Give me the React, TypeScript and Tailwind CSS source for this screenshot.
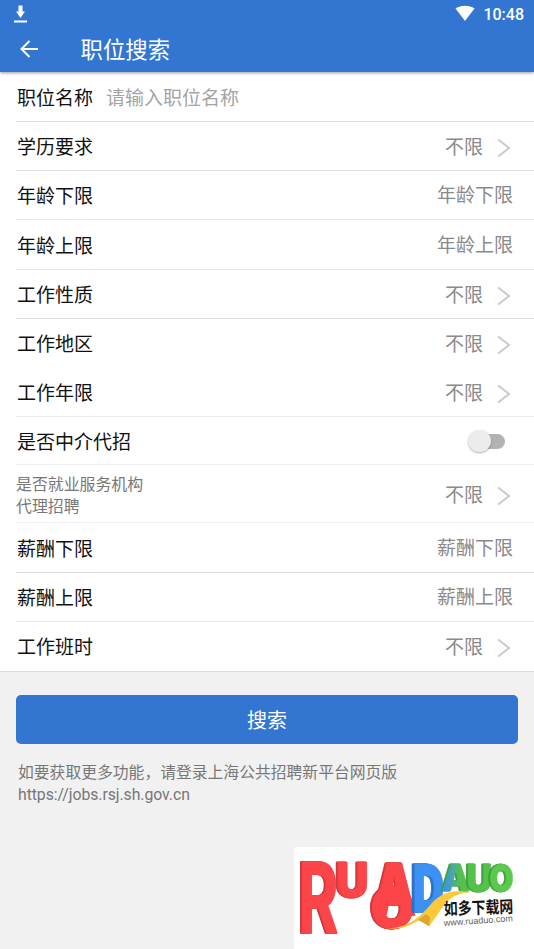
interface FormRow {
  label: string;
  value?: string;
  kind: "input" | "select" | "number" | "switch";
  height: string;
  border: string;
  small?: boolean;
}

const rows: FormRow[] = [
  { label: "职位名称", value: "请输入职位名称", kind: "input", height: "h-[50px]", border: "border-[#dedede]" },
  { label: "学历要求", value: "不限", kind: "select", height: "h-[49px]", border: "border-[#dedede]" },
  { label: "年龄下限", value: "年龄下限", kind: "number", height: "h-[49px]", border: "border-[#ebebeb]" },
  { label: "年龄上限", value: "年龄上限", kind: "number", height: "h-[50px]", border: "border-[#e8e8e8]" },
  { label: "工作性质", value: "不限", kind: "select", height: "h-[49px]", border: "border-[#dedede]" },
  { label: "工作地区", value: "不限", kind: "select", height: "h-[49px]", border: "border-transparent" },
  { label: "工作年限", value: "不限", kind: "select", height: "h-[49px]", border: "border-[#ebebeb]" },
  { label: "是否中介代招", kind: "switch", height: "h-[48px]", border: "border-[#efefef]" },
  { label: "是否就业服务机构代理招聘", value: "不限", kind: "select", height: "h-[58px]", border: "border-[#efefef]", small: true },
  { label: "薪酬下限", value: "薪酬下限", kind: "number", height: "h-[50px]", border: "border-[#dedede]" },
  { label: "薪酬上限", value: "薪酬上限", kind: "number", height: "h-[49px]", border: "border-[#ebebeb]" },
  { label: "工作班时", value: "不限", kind: "select", height: "h-[49px]", border: "border-transparent" },
];

function Chevron() {
  return (
    <svg className="mr-[2px] ml-[14px] h-5 w-[14px]" viewBox="0 0 14 20" fill="none">
      <path d="M1.2 1.5 12 10 1.2 18.5" stroke="#cacaca" strokeWidth="2" />
    </svg>
  );
}

function Toggle() {
  return (
    <div className="relative -mt-[2px] mr-2 h-[15px] w-[36px]">
      <div className="ml-1 h-[15px] w-8 rounded-full bg-[#b2b2b2]" />
      <div className="absolute top-[-4px] left-[-1px] h-[22px] w-[23px] rounded-full bg-[#ececec] shadow-[0_1px_2px_rgba(0,0,0,0.3)]" />
    </div>
  );
}

function Row({ row }: { row: FormRow }) {
  return (
    <div className={`ml-4 flex items-center border-b pl-px ${row.height} ${row.border}`}>
      {row.small ? (
        <span className="-ml-px w-[130px] pt-[4px] text-[15.9px] leading-[22px] text-[#777]">{row.label}</span>
      ) : (
        <span className="pt-[4px] text-[19px] leading-7 text-[#111]">{row.label}</span>
      )}
      {row.kind === "input" ? (
        <span className="ml-[13px] pt-[4px] text-[19px] leading-7 text-[#a3a3a3]">{row.value}</span>
      ) : (
        <div className="ml-auto flex items-center pt-[4px] pr-[21px] text-[19px] leading-7 text-[#8a8a8a]">
          {row.kind === "switch" && <Toggle />}
          {row.kind === "number" && <span className="-mt-[2px]">{row.value}</span>}
          {row.kind === "select" && (
            <>
              <span>{row.value}</span>
              <Chevron />
            </>
          )}
        </div>
      )}
    </div>
  );
}

interface BlockLetterProps {
  char: string;
  transform: string;
  face: string;
}

const redDepth = "[filter:drop-shadow(-1px_0_0_#d8393e)_drop-shadow(-1px_0.5px_0_#c93238)]";
const blueDepth = "[filter:drop-shadow(-1px_0_0_#2f7bd6)_drop-shadow(-2px_0.5px_0_#286fc5)]";
const greenDepth = "[filter:drop-shadow(-1px_0_0_#3fa73c)_drop-shadow(-1px_0.5px_0_#389b38)]";

function BlockLetter({ char, transform, face }: BlockLetterProps) {
  return (
    <text transform={transform} fill={face} stroke={face} strokeWidth="0.6" strokeLinejoin="round">
      {char}
    </text>
  );
}

function SiteLogo() {
  return (
    <svg
      className="block h-[102px] w-[240px] overflow-visible font-[Inter,sans-serif] text-[40px] font-black"
      viewBox="294 847 240 102"
    >
      <defs>
        <linearGradient id="blueGreen" x1="0" x2="1" y1="0" y2="0">
          <stop offset="0.1" stopColor="#3d91f2" />
          <stop offset="0.65" stopColor="#55bf50" />
        </linearGradient>
      </defs>
      <g className={redDepth}>
        <g className="font-bold">
          <BlockLetter char="R" transform="translate(298.5 933) scale(1.52 2.44)" face="#fb4548" />
        </g>
        <BlockLetter char="U" transform="translate(336 897) scale(1.14 1.21)" face="#fb4548" />
      </g>
      <g className={redDepth}>
        <BlockLetter char="A" transform="translate(373 915) scale(1.36 1.8)" face="#fb4548" />
        <BlockLetter char="O" transform="translate(370.5 927.5) scale(1.42 1.42)" face="#fb4548" />
      </g>
      <g className={blueDepth}>
        <BlockLetter char="D" transform="translate(413 912) scale(1.09 1.66)" face="#3d91f2" />
      </g>
      <g className={greenDepth}>
        <BlockLetter char="A" transform="translate(442 891) scale(.88 .93)" face="url(#blueGreen)" />
      </g>
      <g className={greenDepth}>
        <BlockLetter char="U" transform="translate(466.5 892) scale(.9 .96)" face="#55c14a" />
      </g>
      <g className={greenDepth}>
        <BlockLetter char="O" transform="translate(489.5 892) scale(.78 .96)" face="#5ac94c" />
      </g>
      <path d="M388 928.5c20-1 31-11 41-22 10-12 20-18 42-14-18 0-25 9-32 20l-10 14-9-7c-10 7-21 10-32 9Z" fill="#fbc93a" />
      <path d="m418 920 11 6 1-9-4-3Z" fill="#e0a62f" />
      <text
        transform="translate(444 915) rotate(-2) scale(1 1.2)"
        className="font-['Noto_Sans_CJK_SC',sans-serif] text-[13.9px] font-bold"
        fill="#141414"
      >
        如多下载网
      </text>
      <text
        transform="translate(444 926) rotate(-4)"
        className="font-['Liberation_Sans',sans-serif] text-[9px] font-normal"
        fill="#626262"
      >
        www.ruaduo.com
      </text>
    </svg>
  );
}

export default function App() {
  return (
    <div className="flex h-[949px] w-[534px] flex-col overflow-hidden bg-[#f1f1f1] font-[Roboto,'Noto_Sans_CJK_SC',sans-serif]">
      <header className="z-10 h-[72px] bg-[#3276d1] text-white shadow-[0_1px_3px_rgba(0,0,0,0.4)]">
        <div className="flex h-7 items-center justify-between pr-[10px] pl-[14px]">
          <svg className="h-[18px] w-[13px]" viewBox="0 0 13 18" fill="#fff">
            <path d="M4.5 0.5h4v6h2.5L6.5 13 2 6.5h2.5zM0 15.5h13v2H0z" />
          </svg>
          <div className="flex items-center">
            <svg className="mr-[8px] mb-0.5 h-[17px] w-5" viewBox="0 0 20 17" fill="#fff">
              <path d="M0.5 3.5C5.5-.3 14.5-.3 19.5 3.5L10 16Z" />
            </svg>
            <span className="pt-0.5 text-[16px] leading-7 font-medium">10:48</span>
          </div>
        </div>
        <div className="flex h-11 items-center pl-5">
          <svg className="mb-0.5 h-[18px] w-[18px]" viewBox="0 0 18 18" fill="none" stroke="#fff" strokeWidth="2">
            <path d="M18 9H2M9.5 1 1.5 9l8 8" />
          </svg>
          <h1 className="ml-[42.5px] text-[22.4px] leading-8">职位搜索</h1>
        </div>
      </header>

      <main className="border-b border-[#dedede] bg-white">
        {rows.map((row) => (
          <Row key={row.label} row={row} />
        ))}
      </main>

      <button className="mx-4 mt-[23px] h-[49px] shrink-0 rounded-[5px] bg-[#3276d1] pt-0.5 text-[20px] text-white">
        搜索
      </button>

      <div className="mt-[18px] pl-[18px] text-[15.8px] leading-[22px] text-[#777]">
        <p>如要获取更多功能，请登录上海公共招聘新平台网页版</p>
        <p className="tracking-[-0.06px]">https://jobs.rsj.sh.gov.cn</p>
      </div>

      <div className="mt-auto self-end rounded-tl-[3px] bg-white">
        <SiteLogo />
      </div>
    </div>
  );
}
